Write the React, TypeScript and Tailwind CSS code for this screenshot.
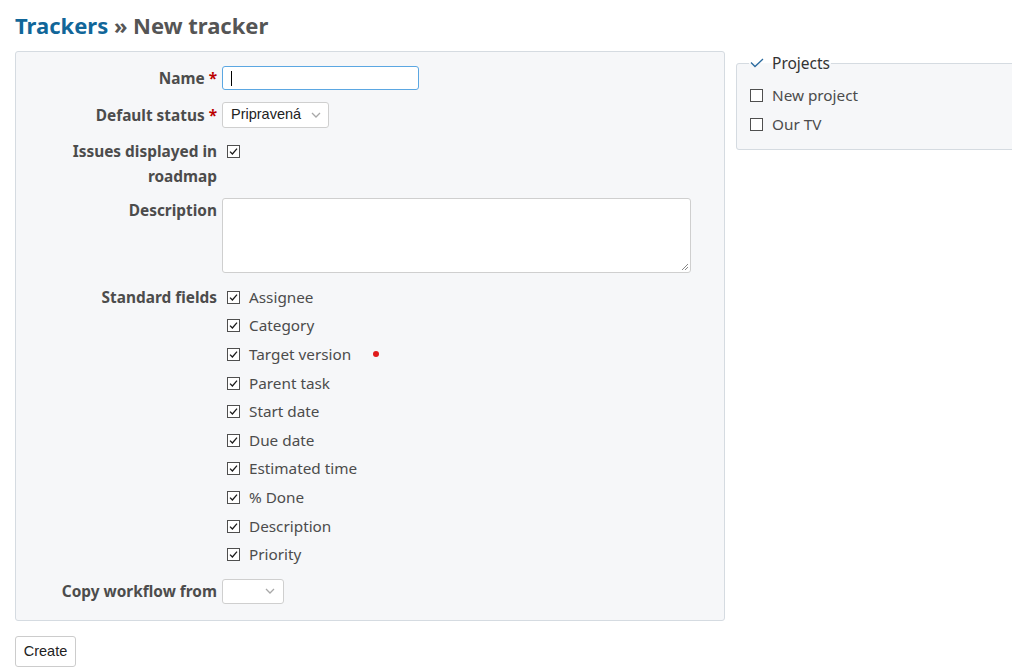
const fields = [
  'Assignee',
  'Category',
  'Target version',
  'Parent task',
  'Start date',
  'Due date',
  'Estimated time',
  '% Done',
  'Description',
  'Priority',
];

function Check({ checked = true }: { checked?: boolean }) {
  return (
    <span className="inline-flex w-[13px] h-[13px] border border-[#4f4f4f] bg-white items-center justify-center shrink-0">
      {checked && (
        <svg width="9" height="9" viewBox="0 0 9 9" fill="none">
          <path d="M1 4.6 L3.4 7 L8 1.6" stroke="#1a1a1a" strokeWidth="1.3" />
        </svg>
      )}
    </span>
  );
}

function Chevron() {
  return (
    <svg width="10" height="6" viewBox="0 0 10 6" fill="none">
      <path d="M1 1 L5 5 L9 1" stroke="#a8a8a8" strokeWidth="1.3" />
    </svg>
  );
}

function Label({ children, req }: { children: React.ReactNode; req?: boolean }) {
  return (
    <div className="text-right font-bold text-[15.4px] leading-[25px] text-[#4c4c4c]">
      {children}
      {req && <span className="text-[#bb0000] ml-[4px]">*</span>}
    </div>
  );
}

export default function App() {
  return (
    <div className="w-[1012px] h-[667px] overflow-hidden bg-white font-['Noto_Sans',sans-serif] text-[#484848]">
      <div className="px-[15px] pt-[9px]">
        <h2 className="text-[22px] font-bold leading-[32px] text-[#555]">
          <span className="text-[#116699]">Trackers</span> » New tracker
        </h2>
        <div className="flex gap-[11px] mt-[10px] items-start">
          <div className="w-[710px] shrink-0">
            <div className="bg-[#f6f7f9] border border-[#d5dbe1] rounded-[3px] pt-[14px] pb-[16px] grid grid-cols-[201px_1fr] gap-x-[5px]">
              <div className="h-[24px] flex items-center justify-end">
                <Label req>Name</Label>
              </div>
              <div className="h-[24px] w-[197px] bg-white border border-[#5ba7e2] rounded-[3px] flex items-center pl-[8px]">
                <span className="w-[1px] h-[15px] bg-black" />
              </div>

              <div className="h-[26px] mt-[12px] flex items-center justify-end">
                <Label req>Default status</Label>
              </div>
              <div className="h-[26px] mt-[12px] w-[107px] bg-white border border-[#cfcfcf] rounded-[3px] flex items-center justify-between pl-[8px] pr-[7px] font-['Liberation_Sans',Arial,sans-serif] text-[14.5px] text-[#222]">
                <span>Pripravená</span>
                <Chevron />
              </div>

              <div className="mt-[11px]">
                <Label>
                  Issues displayed in
                  <br />
                  roadmap
                </Label>
              </div>
              <div className="mt-[11px] h-[25px] flex items-center pl-[5px]">
                <Check />
              </div>

              <div className="mt-[9px]">
                <Label>Description</Label>
              </div>
              <div className="mt-[9px] w-[469px] h-[75px] bg-white border border-[#cfcfcf] rounded-[3px] relative">
                <svg className="absolute right-[1px] bottom-[1px]" width="8" height="8" viewBox="0 0 8 8">
                  <path d="M7 1 L1 7 M7 4 L4 7" stroke="#888" strokeWidth="1" />
                </svg>
              </div>

              <div className="mt-[10px] h-[28.6px] flex items-center justify-end">
                <Label>Standard fields</Label>
              </div>
              <div className="mt-[10px] flex flex-col">
                {fields.map((f) => (
                  <div key={f} className="h-[28.6px] flex items-center pl-[5px] text-[15.3px]">
                    <Check />
                    <span className="ml-[9px] text-[#4c4c4c]">{f}</span>
                    {f === 'Target version' && (
                      <span className="ml-[22px] w-[6px] h-[6px] rounded-full bg-[#e01b1b]" />
                    )}
                  </div>
                ))}
              </div>

              <div className="mt-[10px] h-[25px] flex items-center justify-end">
                <Label>Copy workflow from</Label>
              </div>
              <div className="mt-[10px] h-[25px] w-[62px] bg-white border border-[#cfcfcf] rounded-[3px] flex items-center justify-end pr-[8px]">
                <Chevron />
              </div>
            </div>
            <button className="mt-[15px] h-[31px] w-[61px] bg-white border border-[#cccccc] rounded-[3px] font-['Liberation_Sans',Arial,sans-serif] text-[14.5px] text-[#222]">
              Create
            </button>
          </div>

          <div className="w-[300px] shrink-0 pt-[1px]">
            <fieldset className="border border-[#d5dbe1] rounded-[3px] bg-[#f6f7f9] pl-[13px] pb-[10px] pt-[7px]">
              <legend className="px-[1px] -ml-[1px] flex items-center text-[15.5px] text-[#333] leading-[22px]">
                <svg width="14" height="10" viewBox="0 0 14 10" fill="none" className="mr-[8px]">
                  <path d="M1 4.5 L5 8.5 L13 1" stroke="#2a6a9e" strokeWidth="1.3" />
                </svg>
                Projects
              </legend>
              {['New project', 'Our TV'].map((p) => (
                <div key={p} className="h-[29px] flex items-center text-[15.3px] text-[#4c4c4c]">
                  <Check checked={false} />
                  <span className="ml-[9px]">{p}</span>
                </div>
              ))}
            </fieldset>
          </div>
        </div>
      </div>
    </div>
  );
}
